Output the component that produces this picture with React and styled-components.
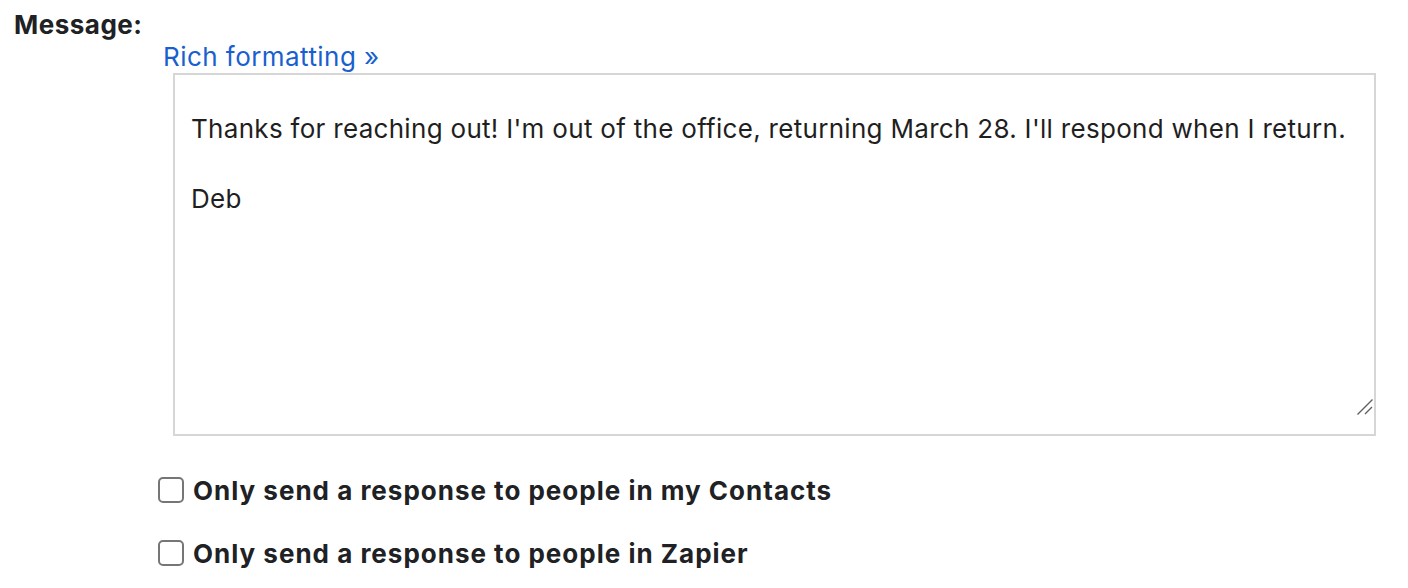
import styled, { createGlobalStyle } from 'styled-components'

const GlobalStyle = createGlobalStyle`
  body {
    margin: 0;
    background: #fff;
    font-family: Inter, Roboto, "Liberation Sans", sans-serif;
    color: #202124;
  }
`

const Page = styled.div`
  padding: 10px 0 0 14px;
`

const FieldLabel = styled.div`
  font-size: 26px;
  line-height: 30px;
  font-weight: 700;
  letter-spacing: 0.5px;
  color: #202124;
`

const RichLink = styled.a`
  display: block;
  margin: 2px 0 0 149px;
  font-size: 26px;
  line-height: 30px;
  letter-spacing: 0.45px;
  color: #1a5fcf;
  text-decoration: none;
  cursor: pointer;
`

const BoxWrap = styled.div`
  position: relative;
  margin: 1px 0 0 159px;
  width: 1203px;
  height: 363px;
`

const MessageBox = styled.textarea`
  display: block;
  box-sizing: border-box;
  width: 100%;
  height: 100%;
  margin: 0;
  padding: 36px 16px 0;
  border: 2px solid #d6d6d6;
  font-family: Inter, Roboto, "Liberation Sans", sans-serif;
  font-size: 26px;
  line-height: 35px;
  letter-spacing: 0.3px;
  color: #1f1f1f;
  overflow: hidden;
  resize: none;
  outline: none;
`

const Grip = styled.svg`
  position: absolute;
  right: 3px;
  bottom: 21px;
  width: 16px;
  height: 16px;
  pointer-events: none;
`

const Options = styled.div`
  display: flex;
  flex-direction: column;
  gap: 33px;
  margin: 39px 0 0 144px;
`

const Option = styled.label`
  display: flex;
  align-items: center;
  gap: 9px;
  height: 30px;
  font-size: 26px;
  font-weight: 700;
  letter-spacing: 1px;
  color: #202124;
  cursor: pointer;
`

const Check = styled.input.attrs({ type: 'checkbox' })`
  appearance: none;
  margin: 0;
  flex: none;
  width: 26px;
  height: 26px;
  box-sizing: border-box;
  border: 2px solid #747775;
  border-radius: 5px;
  background: #fff;
`

const message =
  "Thanks for reaching out! I'm out of the office, returning March 28. I'll respond when I return.\n\nDeb"

const App = () => {
  return (
    <Page>
      <GlobalStyle />
      <FieldLabel>Message:</FieldLabel>
      <RichLink>Rich formatting »</RichLink>
      <BoxWrap>
        <MessageBox defaultValue={message} wrap="off" />
        <Grip viewBox="0 0 16 16">
          <path d="M0.5 15.5 L15.5 0.5 M8 15 L15 8" stroke="#5f5f5f" strokeWidth="1.4" fill="none" />
        </Grip>
      </BoxWrap>
      <Options>
        <Option>
          <Check />
          Only send a response to people in my Contacts
        </Option>
        <Option>
          <Check />
          Only send a response to people in Zapier
        </Option>
      </Options>
    </Page>
  )
}

export default App
